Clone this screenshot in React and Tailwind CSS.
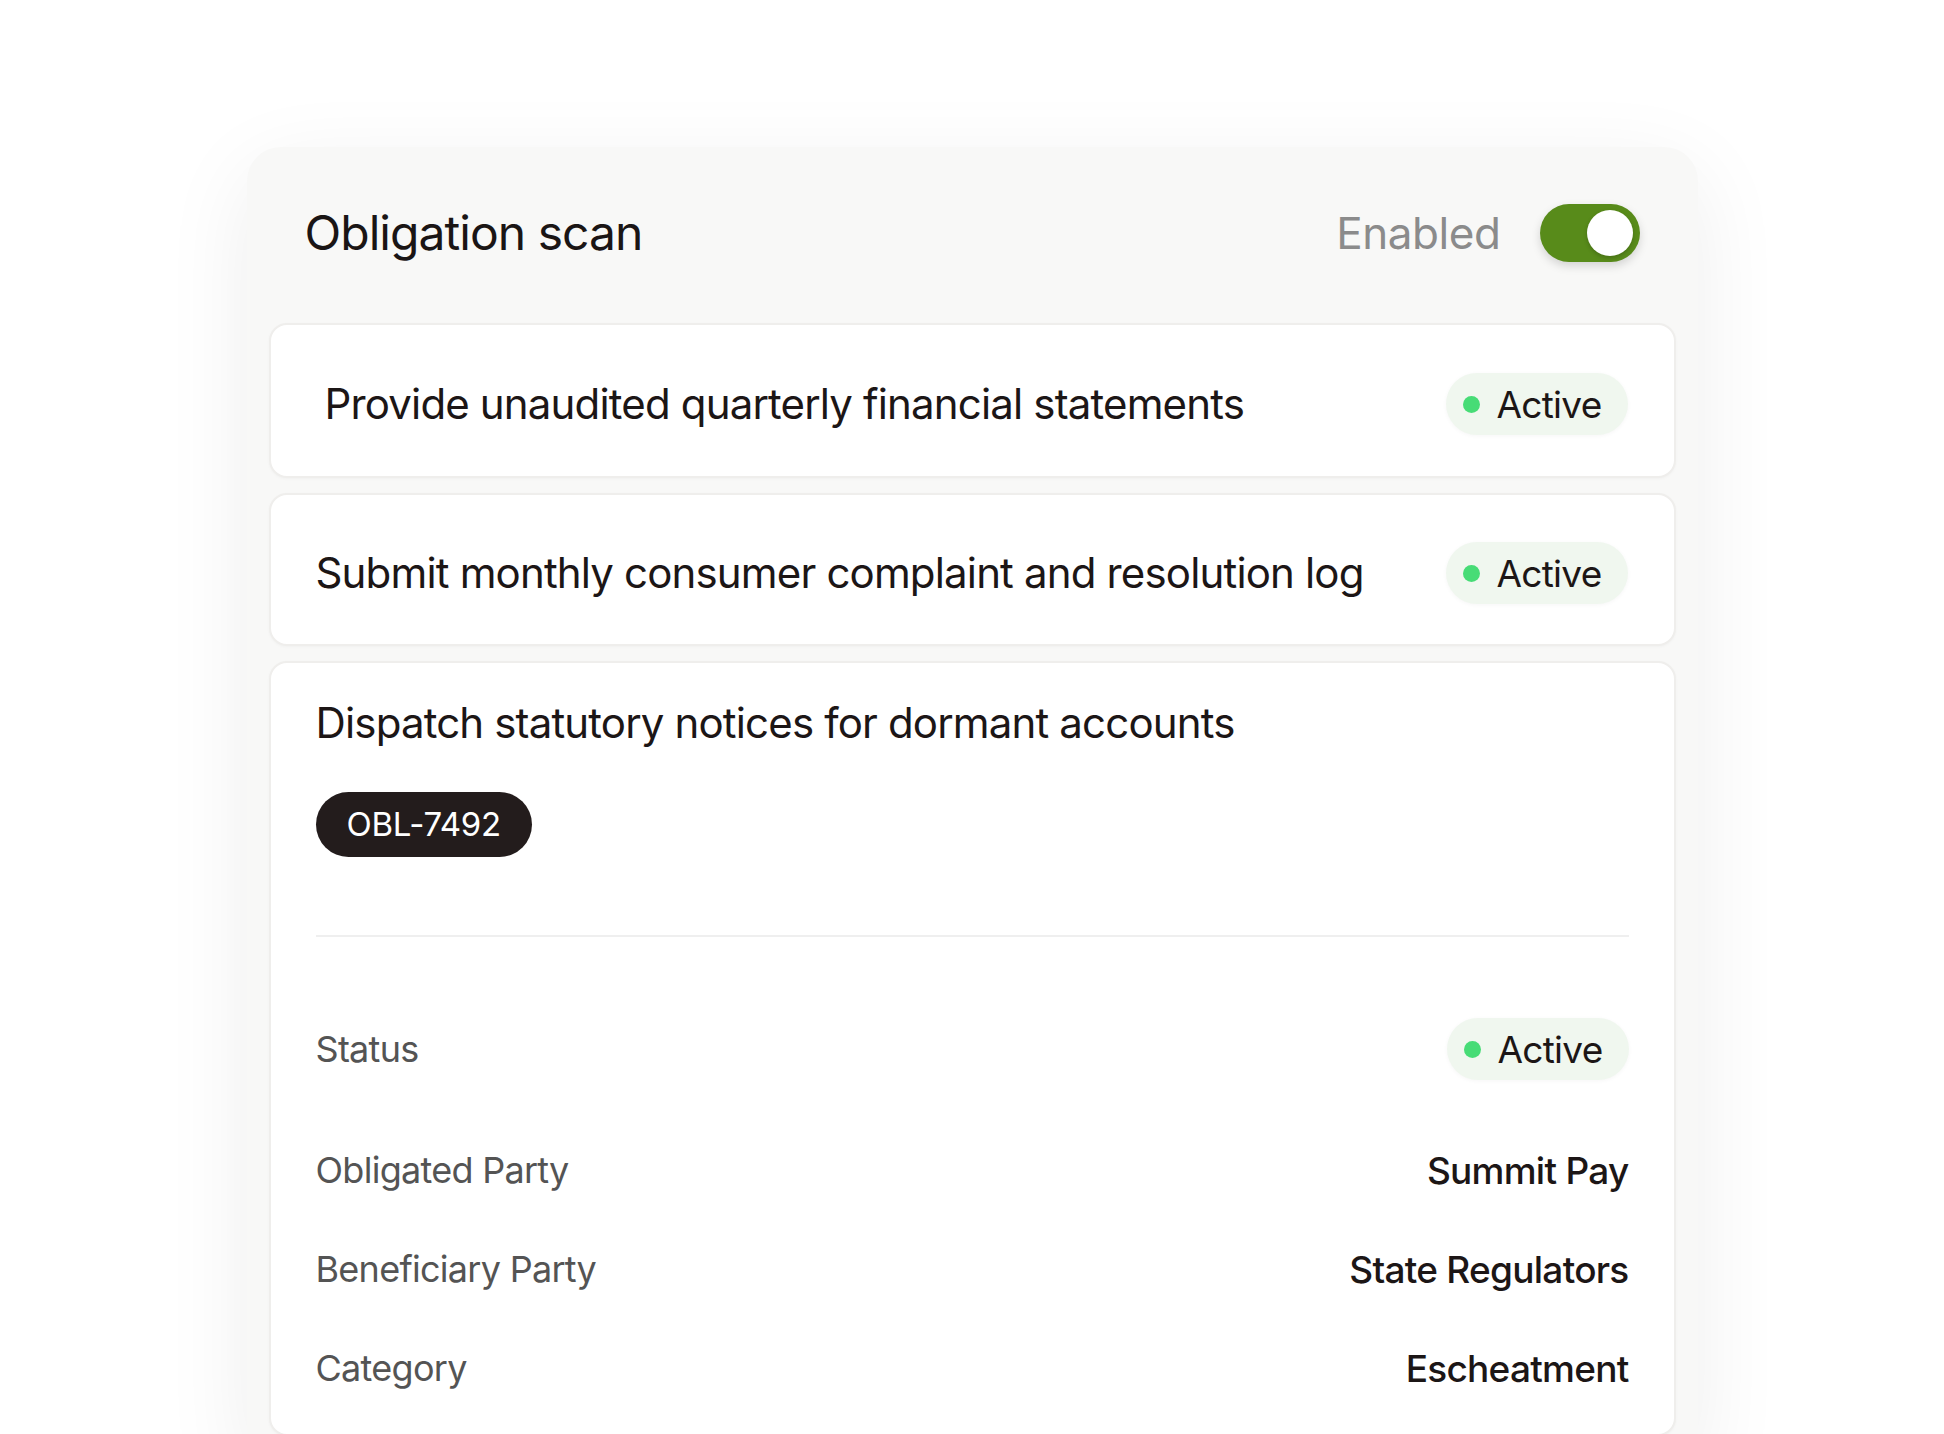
import React from 'react'

const ActiveBadge = () => (
  <span className="flex h-[62px] items-center gap-[17px] rounded-full bg-[#f0f7ef] pl-[17px] pr-[26px] shadow-[0_1px_4px_rgba(0,0,0,0.04)]">
    <span className="size-[17px] rounded-full bg-[#47dc76]" />
    <span className="text-[37px] leading-none tracking-[-0.02em] text-[#1c1616]">Active</span>
  </span>
)

const ObligationRow = ({ title, className }) => (
  <div className={`flex items-center justify-between rounded-[18px] border-2 border-[#efeeec] bg-white pr-[46px] pt-[7px] shadow-[0_1px_3px_rgba(0,0,0,0.03)] ${className}`}>
    <span className="text-[42px] leading-tight tracking-[-0.02em] text-[#1c1616]">{title}</span>
    <ActiveBadge />
  </div>
)

const DetailRow = ({ label, value, className }) => (
  <div className={`flex h-[62px] items-center justify-between ${className}`}>
    <span className="text-[36px] leading-none tracking-[-0.02em] text-[#545454]">{label}</span>
    {value ? (
      <span className="text-[37px] font-medium leading-none tracking-[-0.02em] text-[#1c1616]">{value}</span>
    ) : (
      <ActiveBadge />
    )}
  </div>
)

const App = () => {
  return (
    <div className="h-[1434px] overflow-hidden bg-white pt-[147px] font-['Inter',sans-serif]">
      <div className="mx-auto w-[1451px] rounded-[34px] bg-[#f8f8f7] px-[22px] pb-[24px] shadow-[0_24px_90px_rgba(0,0,0,0.07)]">
        {/* header */}
        <div className="flex h-[176px] items-center justify-between px-[36px] pb-[4px]">
          <h1 className="text-[48px] font-normal leading-none tracking-[-0.02em] text-[#1a1515]">Obligation scan</h1>
          <div className="flex items-center gap-[39px]">
            <span className="text-[44px] leading-none tracking-[-0.01em] text-[#8b8b8b]">Enabled</span>
            <button type="button" className="flex h-[58px] w-[100px] items-center justify-end rounded-full bg-[#588b1a] pr-[7px] shadow-[0_4px_10px_rgba(0,0,0,0.15)]">
              <span className="size-[46px] rounded-full bg-white shadow-[0_2px_4px_rgba(0,0,0,0.2)]" />
            </button>
          </div>
        </div>

        <div className="flex flex-col gap-[15px]">
          <ObligationRow title="Provide unaudited quarterly financial statements" className="h-[155px] pl-[54px]" />
          <ObligationRow title="Submit monthly consumer complaint and resolution log" className="h-[153px] pl-[45px]" />

          <div className="rounded-[18px] border-2 border-[#efeeec] bg-white px-[45px] pb-[35px] pt-[36px] shadow-[0_1px_3px_rgba(0,0,0,0.03)]">
            <h2 className="text-[42px] leading-[48px] tracking-[-0.02em] text-[#1c1616]">Dispatch statutory notices for dormant accounts</h2>
            <div className="mt-[45px] flex">
              <span className="flex h-[65px] items-center rounded-full bg-[#231c1c] px-[31px] text-[33px] leading-none tracking-[-0.01em] text-white">OBL-7492</span>
            </div>
            <div className="mt-[78px] h-[2px] bg-[#efefef]" />
            <div className="mt-[81px] flex flex-col">
              <DetailRow label="Status" />
              <DetailRow label="Obligated Party" value="Summit Pay" className="mt-[59px]" />
              <DetailRow label="Beneficiary Party" value="State Regulators" className="mt-[37px]" />
              <DetailRow label="Category" value="Escheatment" className="mt-[37px]" />
            </div>
          </div>
        </div>
      </div>
    </div>
  )
}

export default App
